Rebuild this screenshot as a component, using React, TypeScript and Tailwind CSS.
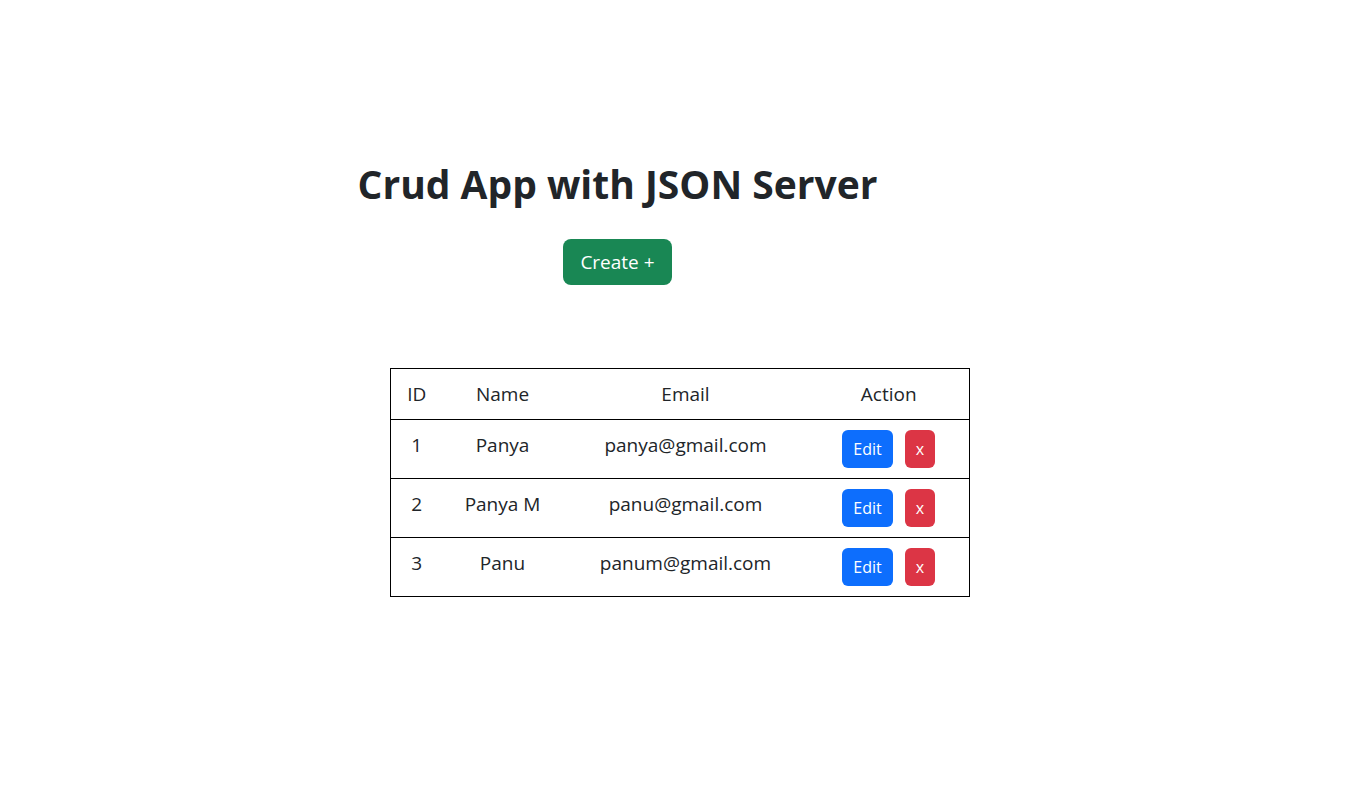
const users = [
  { id: 1, name: 'Panya', email: 'panya@gmail.com' },
  { id: 2, name: 'Panya M', email: 'panu@gmail.com' },
  { id: 3, name: 'Panu', email: 'panum@gmail.com' },
];

export default function App() {
  return (
    <div className="min-h-screen bg-white text-[#212529]" style={{ fontFamily: '"Open Sans", "Noto Sans", sans-serif' }}>
      <div className="pt-[160px] ml-[317px] w-[601px] flex flex-col items-center">
        <h1 className="text-[39px] leading-[48px] font-bold">Crud App with JSON Server</h1>
        <button className="mt-[31px] h-[46px] px-[17px] rounded-[8px] bg-[#198754] text-white text-[19px]">
          Create +
        </button>
      </div>

      <table className="mt-[83px] ml-[390px] w-[580px] border border-black border-collapse text-[19px] leading-[30px] text-center">
        <thead>
          <tr className="border-b border-black">
            <th className="w-[52px] py-[10px] font-normal">ID</th>
            <th className="w-[120px] py-[10px] font-normal">Name</th>
            <th className="w-[246px] py-[10px] font-normal">Email</th>
            <th className="py-[10px] font-normal">Action</th>
          </tr>
        </thead>
        <tbody>
          {users.map((u) => (
            <tr key={u.id} className="border-b border-black">
              <td className="py-[10px] align-top">{u.id}</td>
              <td className="py-[10px] align-top">{u.name}</td>
              <td className="py-[10px] align-top">{u.email}</td>
              <td className="py-[10px] align-top">
                <div className="flex justify-center gap-[12px]">
                  <button className="h-[38px] px-[11px] rounded-[6px] bg-[#0d6efd] text-white text-[16px]">Edit</button>
                  <button className="h-[38px] px-[11px] rounded-[6px] bg-[#dc3545] text-white text-[16px]">x</button>
                </div>
              </td>
            </tr>
          ))}
        </tbody>
      </table>
    </div>
  );
}
